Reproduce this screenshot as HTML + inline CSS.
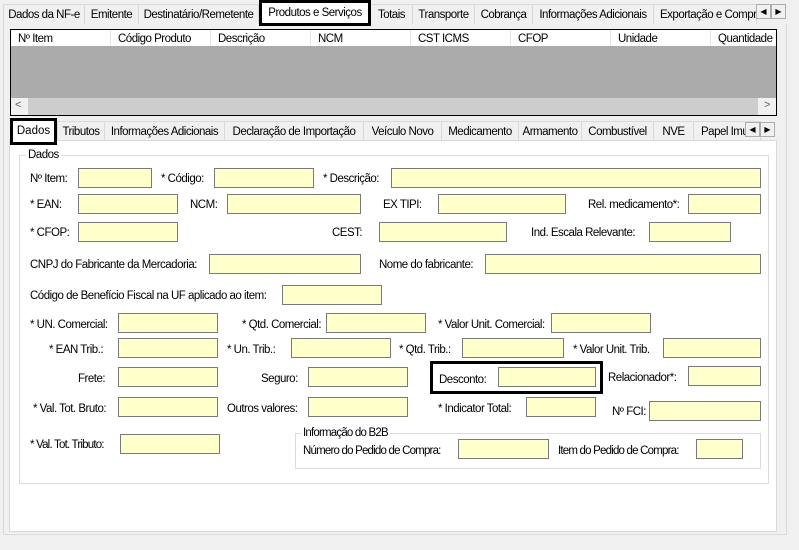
<!DOCTYPE html>
<html><head><meta charset="utf-8"><style>
*{box-sizing:border-box;margin:0;padding:0}
body{width:799px;height:550px;background:#f0f0f0;position:relative;overflow:hidden;font-family:"Liberation Sans",sans-serif;font-size:11.5px;color:#000}
.a{position:absolute;white-space:nowrap}
.t{position:absolute;height:20px;border:1px solid #d9d9d9;border-bottom:none;background:#f0f0f0;line-height:20px;text-align:center;white-space:nowrap;overflow:hidden;letter-spacing:-0.5px}
.i{position:absolute;height:20px;background:#ffffcc;border:1px solid #7a7a7a}
.l{position:absolute;white-space:nowrap;line-height:22px;letter-spacing:-0.5px}
.arr{position:absolute;width:15px;height:15px;border:1px solid #adadad;background:#f0f0f0;font-size:8px;text-align:center;line-height:13px}
.gb{position:absolute;border:1px solid #dcdcdc}
.gl{position:absolute;background:#fff;padding:0 2px;line-height:13px;letter-spacing:-0.5px}
.hd{position:absolute;top:0;height:16px;line-height:18px;border-right:1px solid #e5e5e5;padding-left:7px;letter-spacing:-0.5px}
</style></head><body>
<div class="t" style="left:3px;top:4px;width:82px">Dados da NF-e</div>
<div class="t" style="left:84px;top:4px;width:55px">Emitente</div>
<div class="t" style="left:138px;top:4px;width:121px">Destinatário/Remetente</div>
<div class="t" style="left:370px;top:4px;width:43px">Totais</div>
<div class="t" style="left:412px;top:4px;width:63px">Transporte</div>
<div class="t" style="left:474px;top:4px;width:59px">Cobrança</div>
<div class="t" style="left:532px;top:4px;width:122px">Informações Adicionais</div>
<div class="t" style="left:653px;top:4px;width:104px;text-align:left;padding-left:6px">Exportação e Compra</div>
<div class="a" style="left:259px;top:0;width:112px;height:26px;background:#fff;border:3px solid #000;text-align:center;line-height:20px;letter-spacing:-0.5px">Produtos e Serviços</div>
<div class="arr" style="left:756px;top:4px">◀</div><div class="arr" style="left:771px;top:4px">▶</div>
<div class="a" style="left:3px;top:24px;width:784px;height:511px;border:1px solid #dadada;border-top:none;background:#f0f0f0;z-index:-1"></div>
<div class="a" style="left:10px;top:29px;width:767px;height:87px;border:1px solid #000;background:#ababab">
 <div class="a" style="left:0;top:0;width:765px;height:16px;background:#fff">
  <div class="hd" style="left:0;width:100px">Nº Item</div>
  <div class="hd" style="left:100px;width:100px">Código Produto</div>
  <div class="hd" style="left:200px;width:100px">Descrição</div>
  <div class="hd" style="left:300px;width:100px">NCM</div>
  <div class="hd" style="left:400px;width:100px">CST ICMS</div>
  <div class="hd" style="left:500px;width:100px">CFOP</div>
  <div class="hd" style="left:600px;width:100px">Unidade</div>
  <div class="hd" style="left:700px;width:70px;border:none">Quantidade</div>
 </div>
 <div class="a" style="left:0;top:68px;width:765px;height:17px;background:#f0f0f0">
  <div class="a" style="left:17px;top:0;width:730px;height:17px;background:#cdcdcd"></div>
  <div class="a" style="left:4px;top:1px;color:#606060;font-size:11px">&lt;</div>
  <div class="a" style="left:753px;top:1px;color:#606060;font-size:11px">&gt;</div>
 </div>
</div>
<div class="t" style="left:57px;top:121px;width:48px">Tributos</div>
<div class="t" style="left:104px;top:121px;width:121px">Informações Adicionais</div>
<div class="t" style="left:224px;top:121px;width:140px">Declaração de Importação</div>
<div class="t" style="left:363px;top:121px;width:79px">Veículo Novo</div>
<div class="t" style="left:441px;top:121px;width:78px">Medicamento</div>
<div class="t" style="left:518px;top:121px;width:64px">Armamento</div>
<div class="t" style="left:581px;top:121px;width:73px">Combustível</div>
<div class="t" style="left:653px;top:121px;width:41px">NVE</div>
<div class="t" style="left:693px;top:121px;width:68px;text-align:left;padding-left:7px">Papel Imune</div>
<div class="arr" style="left:745px;top:122px">◀</div><div class="arr" style="left:760px;top:122px">▶</div>
<div class="a" style="left:9px;top:140px;width:768px;height:392px;background:#fff;border:1px solid #dadada"></div>
<div class="a" style="left:10px;top:118px;width:47px;height:27px;background:#fff;border:3px solid #000;text-align:center;line-height:20px">Dados</div>
<div class="gb" style="left:19px;top:155px;width:750px;height:329px"></div>
<div class="gl" style="left:26px;top:149px">Dados</div>

<div class="l" style="left:30px;top:168px">Nº Item:</div><div class="i" style="left:78px;top:168px;width:74px"></div>
<div class="l" style="left:161px;top:168px">* Código:</div><div class="i" style="left:214px;top:168px;width:100px"></div>
<div class="l" style="left:323px;top:168px">* Descrição:</div><div class="i" style="left:391px;top:168px;width:370px"></div>

<div class="l" style="left:30px;top:194px">* EAN:</div><div class="i" style="left:78px;top:194px;width:100px"></div>
<div class="l" style="left:190px;top:194px">NCM:</div><div class="i" style="left:227px;top:194px;width:134px"></div>
<div class="l" style="left:383px;top:194px">EX TIPI:</div><div class="i" style="left:438px;top:194px;width:128px"></div>
<div class="l" style="left:588px;top:194px">Rel. medicamento*:</div><div class="i" style="left:688px;top:194px;width:73px"></div>

<div class="l" style="left:30px;top:222px">* CFOP:</div><div class="i" style="left:78px;top:222px;width:100px"></div>
<div class="l" style="left:332px;top:222px">CEST:</div><div class="i" style="left:379px;top:222px;width:128px"></div>
<div class="l" style="left:531px;top:222px">Ind. Escala Relevante:</div><div class="i" style="left:649px;top:222px;width:82px"></div>

<div class="l" style="left:30px;top:254px">CNPJ do Fabricante da Mercadoria:</div><div class="i" style="left:209px;top:254px;width:152px"></div>
<div class="l" style="left:379px;top:254px">Nome do fabricante:</div><div class="i" style="left:485px;top:254px;width:276px"></div>

<div class="l" style="left:30px;top:285px">Código de Benefício Fiscal na UF aplicado ao item:</div><div class="i" style="left:282px;top:285px;width:100px"></div>

<div class="l" style="left:30px;top:314px">* UN. Comercial:</div><div class="i" style="left:118px;top:313px;width:100px"></div>
<div class="l" style="left:242px;top:314px">* Qtd. Comercial:</div><div class="i" style="left:326px;top:313px;width:100px"></div>
<div class="l" style="left:438px;top:314px">* Valor Unit. Comercial:</div><div class="i" style="left:551px;top:313px;width:100px"></div>

<div class="l" style="left:49px;top:339px">* EAN Trib.:</div><div class="i" style="left:118px;top:338px;width:100px"></div>
<div class="l" style="left:227px;top:339px">* Un. Trib.:</div><div class="i" style="left:291px;top:338px;width:100px"></div>
<div class="l" style="left:399px;top:339px">* Qtd. Trib.:</div><div class="i" style="left:462px;top:338px;width:102px"></div>
<div class="l" style="left:573px;top:339px">* Valor Unit. Trib.</div><div class="i" style="left:663px;top:338px;width:98px"></div>

<div class="l" style="left:78px;top:368px">Frete:</div><div class="i" style="left:118px;top:367px;width:100px"></div>
<div class="l" style="left:261px;top:368px">Seguro:</div><div class="i" style="left:308px;top:367px;width:100px"></div>
<div class="a" style="left:430px;top:361px;width:173px;height:33px;border:3px solid #000"></div>
<div class="l" style="left:439px;top:369px">Desconto:</div><div class="i" style="left:498px;top:367px;width:98px"></div>
<div class="l" style="left:608px;top:367px">Relacionador*:</div><div class="i" style="left:688px;top:366px;width:73px"></div>

<div class="l" style="left:33px;top:398px">* Val. Tot. Bruto:</div><div class="i" style="left:118px;top:397px;width:100px"></div>
<div class="l" style="left:227px;top:398px">Outros valores:</div><div class="i" style="left:308px;top:397px;width:100px"></div>
<div class="l" style="left:438px;top:398px">* Indicator Total:</div><div class="i" style="left:526px;top:397px;width:70px"></div>
<div class="l" style="left:612px;top:401px">Nº FCI:</div><div class="i" style="left:649px;top:401px;width:112px"></div>

<div class="l" style="left:30px;top:434px;letter-spacing:-0.8px">* Val. Tot. Tributo:</div><div class="i" style="left:120px;top:434px;width:100px"></div>

<div class="gb" style="left:295px;top:433px;width:466px;height:36px"></div>
<div class="gl" style="left:301px;top:427px;letter-spacing:-0.8px">Informação do B2B</div>
<div class="l" style="left:303px;top:440px;letter-spacing:-0.8px">Número do Pedido de Compra:</div><div class="i" style="left:458px;top:439px;width:91px"></div>
<div class="l" style="left:558px;top:440px;letter-spacing:-0.8px">Item do Pedido de Compra:</div><div class="i" style="left:696px;top:439px;width:47px"></div>
</body></html>
